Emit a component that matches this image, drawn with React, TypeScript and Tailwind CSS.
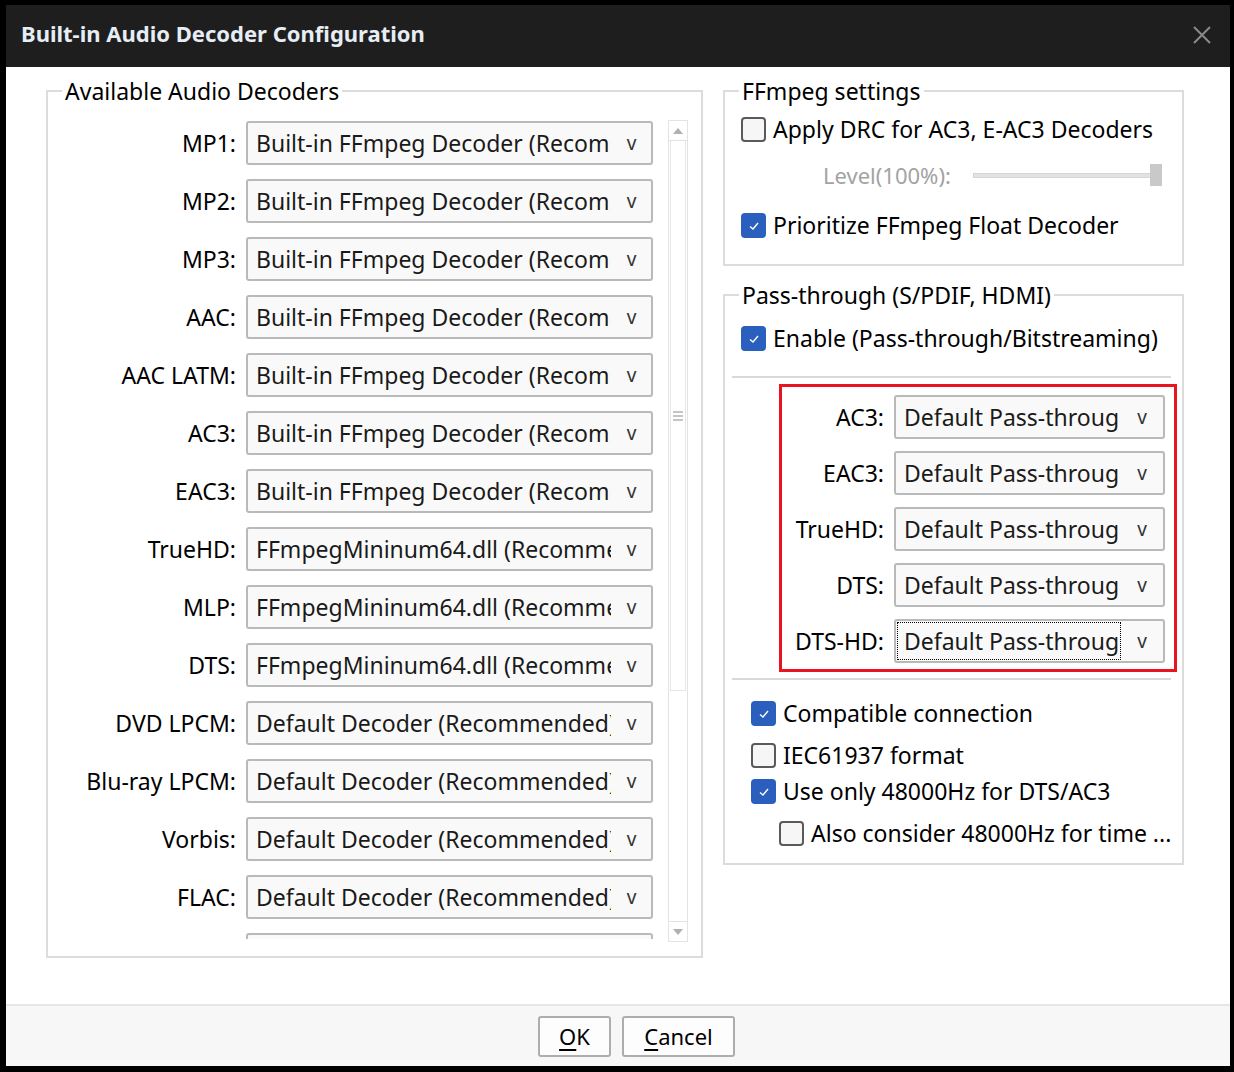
import React from "react";

const font = { fontFamily: '"Noto Sans", "Open Sans", sans-serif' };

const decoders: [string, string][] = [
  ["MP1:", "Built-in FFmpeg Decoder (Recommended)"],
  ["MP2:", "Built-in FFmpeg Decoder (Recommended)"],
  ["MP3:", "Built-in FFmpeg Decoder (Recommended)"],
  ["AAC:", "Built-in FFmpeg Decoder (Recommended)"],
  ["AAC LATM:", "Built-in FFmpeg Decoder (Recommended)"],
  ["AC3:", "Built-in FFmpeg Decoder (Recommended)"],
  ["EAC3:", "Built-in FFmpeg Decoder (Recommended)"],
  ["TrueHD:", "FFmpegMininum64.dll (Recommended)"],
  ["MLP:", "FFmpegMininum64.dll (Recommended)"],
  ["DTS:", "FFmpegMininum64.dll (Recommended)"],
  ["DVD LPCM:", "Default Decoder (Recommended)"],
  ["Blu-ray LPCM:", "Default Decoder (Recommended)"],
  ["Vorbis:", "Default Decoder (Recommended)"],
  ["FLAC:", "Default Decoder (Recommended)"],
  ["ALAC:", "Default Decoder (Recommended)"],
];

const passthrough = ["AC3:", "EAC3:", "TrueHD:", "DTS:", "DTS-HD:"];

function Select({ value, width, textWidth, focus }: { value: string; width: string; textWidth: string; focus?: boolean }) {
  return (
    <div className={`${width} h-[44px] shrink-0 flex items-center rounded-[3px] border-2 border-[#b9b9b9] bg-[#f9f9f9] pl-[1px]`}>
      <div className={`${textWidth} h-[38px] flex items-center overflow-hidden whitespace-nowrap pl-[6px] ${focus ? "border border-dotted border-black" : "border border-transparent"}`}>
        <span className="text-[23px] text-[#1a1a1a]">{value}</span>
      </div>
      <span className="flex-1 text-center text-[19px] text-[#333] pt-[1px]">v</span>
    </div>
  );
}

function Check({ checked, label }: { checked?: boolean; label: string }) {
  return (
    <div className="flex items-center gap-[7px]">
      {checked ? (
        <div className="w-[25px] h-[25px] rounded-[4px] bg-[#2a5fbd] flex items-center justify-center">
          <svg width="14" height="14" viewBox="0 0 14 14">
            <path d="M3 7.5 L6 10 L11 4" stroke="#fff" strokeWidth="1.4" fill="none" />
          </svg>
        </div>
      ) : (
        <div className="w-[25px] h-[25px] rounded-[4px] border-2 border-[#5a5a5a] bg-[#f6f6f6]" />
      )}
      <span className="text-[23px] text-black leading-none">{label}</span>
    </div>
  );
}

function Group({ title, className, children }: { title: string; className: string; children: React.ReactNode }) {
  return (
    <fieldset className={`border-2 border-[#dcdcdc] ${className}`}>
      <legend className="ml-[14px] px-[3px] h-[30px] leading-[30px] text-[23px] text-black">{title}</legend>
      {children}
    </fieldset>
  );
}

export default function App() {
  return (
    <div className="w-[1234px] h-[1072px] bg-black pt-[5px] pl-[6px] pr-[4px] pb-[6px]" style={font}>
      <div className="h-full flex flex-col bg-white">
        <div className="h-[62px] bg-[#1e1e1e] flex items-center justify-between pl-[15px] pr-[18px] pb-[5px]">
          <span className="text-[22px] font-bold text-[#e6edf5]">Built-in Audio Decoder Configuration</span>
          <svg width="20" height="20" viewBox="0 0 20 20" className="mt-[2px]">
            <path d="M2 2 L18 18 M18 2 L2 18" stroke="#8a8a8a" strokeWidth="2" />
          </svg>
        </div>

        <div className="flex-1 flex gap-[20px] pl-[40px] pt-[9px]">
          <Group title="Available Audio Decoders" className="w-[657px] h-[882px] flex-none">
            <div className="flex pt-[15px] pr-[13px]">
              <div className="h-[818px] overflow-hidden flex-1">
                <div className="flex flex-col gap-[14px]">
                  {decoders.map(([l, v]) => (
                    <div key={l} className="flex items-center gap-[10px]">
                      <span className="w-[188px] text-right text-[23px] text-black">{l}</span>
                      <Select value={v} width="w-[407px]" textWidth="w-[363px]" />
                    </div>
                  ))}
                </div>
              </div>
              <div className="w-[20px] h-[822px] ml-[14px] -mt-[1px] flex flex-col border border-[#e3e3e3]">
                <div className="h-[20px] flex items-center justify-center border-b border-[#e3e3e3]">
                  <svg width="10" height="6" viewBox="0 0 10 6"><path d="M0 6 L5 0 L10 6 Z" fill="#b0b0b0" /></svg>
                </div>
                <div className="h-[550px] mx-[1px] border-x border-b border-[#e6e6e6] flex items-center justify-center">
                  <div className="flex flex-col gap-[2px]">
                    <div className="w-[10px] h-[2px] bg-[#c4c4c4]" />
                    <div className="w-[10px] h-[2px] bg-[#c4c4c4]" />
                    <div className="w-[10px] h-[2px] bg-[#c4c4c4]" />
                  </div>
                </div>
                <div className="flex-1" />
                <div className="h-[20px] flex items-center justify-center border-t border-[#e3e3e3]">
                  <svg width="10" height="6" viewBox="0 0 10 6"><path d="M0 0 L5 6 L10 0 Z" fill="#b0b0b0" /></svg>
                </div>
              </div>
            </div>
          </Group>

          <div className="w-[461px] flex flex-col gap-[14px]">
            <Group title="FFmpeg settings" className="h-[190px]">
              <div className="flex flex-col pl-[16px] pt-[11px]">
                <Check label="Apply DRC for AC3, E-AC3 Decoders" />
                <div className="flex items-center mt-[22px] ml-[82px] gap-[22px]">
                  <span className="text-[22px] text-[#a3a3a3] leading-none">Level(100%):</span>
                  <div className="relative w-[189px] h-[22px] flex items-center">
                    <div className="w-full h-[5px] bg-[#e3e3e3] border border-[#d6d6d6]" />
                    <div className="absolute right-0 top-0 w-[12px] h-[22px] bg-[#c9c9c9]" />
                  </div>
                </div>
                <div className="mt-[27px]">
                  <Check checked label="Prioritize FFmpeg Float Decoder" />
                </div>
              </div>
            </Group>

            <Group title="Pass-through (S/PDIF, HDMI)" className="h-[585px]">
              <div className="pl-[16px] pt-[16px]">
                <Check checked label="Enable (Pass-through/Bitstreaming)" />
              </div>
              <div className="ml-[7px] mr-[11px] mt-[25px] h-[2px] bg-[#d9d9d9]" />
              <div className="ml-[54px] mr-[5px] mt-[6px] border-[3px] border-[#e8141f] pt-[8px] pb-[6px] pr-[9px] flex flex-col gap-[12px]">
                {passthrough.map((l) => (
                  <div key={l} className="flex items-center gap-[10px]">
                    <span className="flex-1 text-right text-[23px] text-black">{l}</span>
                    <Select value="Default Pass-through" width="w-[271px]" textWidth="w-[224px]" focus={l === "DTS-HD:"} />
                  </div>
                ))}
              </div>
              <div className="ml-[7px] mr-[11px] mt-[6px] h-[2px] bg-[#d9d9d9]" />
              <div className="pl-[26px] pt-[21px] flex flex-col">
                <Check checked label="Compatible connection" />
                <div className="mt-[17px]">
                  <Check label="IEC61937 format" />
                </div>
                <div className="mt-[11px]">
                  <Check checked label="Use only 48000Hz for DTS/AC3" />
                </div>
                <div className="mt-[17px] ml-[28px]">
                  <Check label="Also consider 48000Hz for time ..." />
                </div>
              </div>
            </Group>
          </div>
        </div>

        <div className="h-[62px] bg-[#f7f7f7] border-t-2 border-[#e6e6e6] flex items-center pl-[532px] gap-[11px]">
          <button className="w-[73px] h-[41px] rounded-[3px] border-2 border-[#adadad] bg-[#fdfdfd] text-[22px] text-black">
            <span className="underline underline-offset-4">O</span>K
          </button>
          <button className="w-[113px] h-[41px] rounded-[3px] border-2 border-[#adadad] bg-[#fdfdfd] text-[22px] text-black">
            <span className="underline underline-offset-4">C</span>ancel
          </button>
        </div>
      </div>
    </div>
  );
}
